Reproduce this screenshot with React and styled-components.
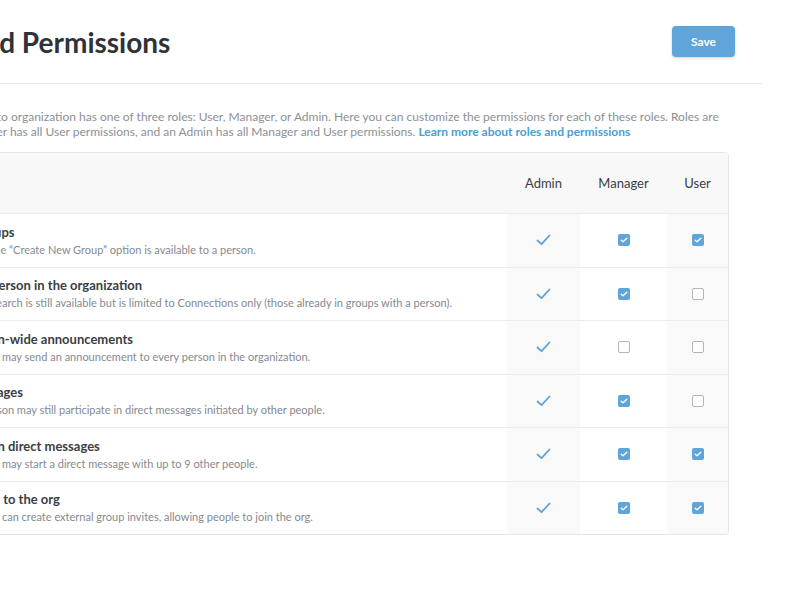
import React from 'react';
import styled, { createGlobalStyle } from 'styled-components';

const GlobalStyle = createGlobalStyle`
  html, body {
    margin: 0;
    padding: 0;
    background: #ffffff;
    overflow: hidden;
  }
  body {
    font-family: Lato, "Open Sans", sans-serif;
    color: #33363b;
  }
`;

const Page = styled.div`
  width: 800px;
  height: 600px;
  overflow: hidden;
`;

// the screenshot is cropped on the left, so the content sits partly off screen
const Content = styled.div`
  margin-left: -105px;
  width: 867px;
`;

const Header = styled.header`
  display: flex;
  align-items: center;
  justify-content: space-between;
  height: 83px;
  padding-right: 27px;
  border-bottom: 1px solid #e9e9ea;
`;

const Title = styled.h1`
  margin: 0;
  font-size: 28px;
  font-weight: 700;
  color: #2f3237;
  white-space: nowrap;
`;

const SaveButton = styled.button`
  width: 63px;
  height: 31px;
  border: none;
  border-radius: 4px;
  background: #5fa5d9;
  box-shadow: 0 1px 3px rgba(0, 0, 0, 0.18);
  color: #ffffff;
  font-family: Lato, sans-serif;
  font-size: 12px;
  font-weight: 700;
`;

const Intro = styled.p`
  margin: 25px 0 0;
  font-size: 12px;
  line-height: 15px;
  color: #8c9096;
  white-space: nowrap;
`;

const Link = styled.a`
  color: #4c9dd6;
  font-weight: 700;
  text-decoration: none;
`;

const Table = styled.div`
  margin: 13px 33px 0 0;
  border: 1px solid #e6e6e7;
  border-radius: 4px;
  display: grid;
  grid-template-columns: 1fr 73px 87px 61px;
  overflow: hidden;
`;

const HeadCell = styled.div`
  height: 60px;
  background: #f8f8f8;
  display: flex;
  align-items: center;
  justify-content: center;
  font-size: 13px;
  color: #3a3d42;
`;

const Cell = styled.div`
  height: 53.5px;
  box-sizing: border-box;
  border-top: 1px solid #ececed;
  background: ${p => (p.$shade ? '#f9f9f9' : '#ffffff')};
  display: flex;
  align-items: center;
  justify-content: center;
`;

const TextCell = styled(Cell)`
  flex-direction: column;
  align-items: flex-start;
  justify-content: center;
  padding-left: 10px;
  white-space: nowrap;
`;

const RowTitle = styled.div`
  font-size: 13px;
  font-weight: 700;
  color: #3b3e43;
  line-height: 17px;
`;

const RowDesc = styled.div`
  margin-top: 1px;
  font-size: 11px;
  color: #85898f;
  line-height: 15px;
`;

const Box = styled.span`
  width: 12px;
  height: 12px;
  box-sizing: border-box;
  border-radius: 2px;
  display: inline-flex;
  align-items: center;
  justify-content: center;
  background: ${p => (p.$checked ? '#5fa5d9' : '#ffffff')};
  border: ${p => (p.$checked ? 'none' : '1.5px solid #b4b5b8')};
`;

const Tick = () => (
  <svg width="15" height="12" viewBox="0 0 15 12">
    <path d="M1.5 6.5 L5.5 10.2 L13.5 1.5" fill="none" stroke="#5ea3d8" strokeWidth="1.8" strokeLinecap="round" strokeLinejoin="round" />
  </svg>
);

const Checkbox = ({ checked }) => (
  <Box $checked={checked}>
    {checked && (
      <svg width="8" height="6" viewBox="0 0 8 6">
        <path d="M1.2 3.2 L3.1 4.8 L6.8 1.2" fill="none" stroke="#ffffff" strokeWidth="1.3" strokeLinecap="round" strokeLinejoin="round" />
      </svg>
    )}
  </Box>
);

const rows = [
  {
    title: 'Create new groups',
    desc: 'Decides whether the \u201cCreate New Group\u201d option is available to a person.',
    manager: true,
    user: true,
  },
  {
    title: 'Search for any person in the organization',
    desc: 'If left unchecked, search is still available but is limited to Connections only (those already in groups with a person).',
    manager: true,
    user: false,
  },
  {
    title: 'Add organization-wide announcements',
    desc: 'If granted, a person may send an announcement to every person in the organization.',
    manager: false,
    user: false,
  },
  {
    title: 'Use direct messages',
    desc: 'If unchecked, a person may still participate in direct messages initiated by other people.',
    manager: true,
    user: false,
  },
  {
    title: 'Create a group in direct messages',
    desc: 'If granted, a person may start a direct message with up to 9 other people.',
    manager: true,
    user: true,
  },
  {
    title: 'Invite new users to the org',
    desc: 'If granted, a person can create external group invites, allowing people to join the org.',
    manager: true,
    user: true,
  },
];

export default function App() {
  return (
    <Page>
      <GlobalStyle />
      <Content>
        <Header>
          <Title>Roles and Permissions</Title>
          <SaveButton>Save</SaveButton>
        </Header>
        <Intro>
          Each person linked to organization has one of three roles: User, Manager, or Admin. Here you can customize the permissions for each of these roles. Roles are
          <br />
          ranked, so a Manager has all User permissions, and an Admin has all Manager and User permissions.{' '}
          <Link href="#">Learn more about roles and permissions</Link>
        </Intro>
        <Table>
          <HeadCell />
          <HeadCell>Admin</HeadCell>
          <HeadCell>Manager</HeadCell>
          <HeadCell>User</HeadCell>
          {rows.map(r => (
            <React.Fragment key={r.title}>
              <TextCell>
                <RowTitle>{r.title}</RowTitle>
                <RowDesc>{r.desc}</RowDesc>
              </TextCell>
              <Cell $shade>
                <Tick />
              </Cell>
              <Cell>
                <Checkbox checked={r.manager} />
              </Cell>
              <Cell $shade>
                <Checkbox checked={r.user} />
              </Cell>
            </React.Fragment>
          ))}
        </Table>
      </Content>
    </Page>
  );
}
